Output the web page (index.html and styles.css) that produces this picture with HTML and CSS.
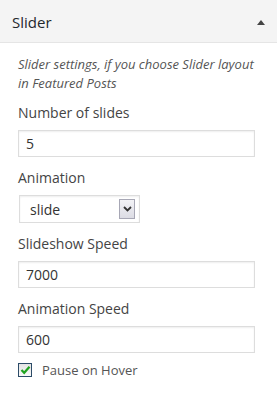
FILE: index.html
```html
<!DOCTYPE html>
<html lang="en">
<head>
    <meta charset="UTF-8">
    <meta name="viewport" content="width=device-width, initial-scale=1.0">
    <title>Slider</title>
    <link rel="stylesheet" href="styles.css">
</head>
<body>

    <div class="widget">
        <!-- Widget header -->
        <div class="widget-top">
            <h3>Slider</h3>
            <span class="toggle"></span>
        </div>

        <div class="widget-inside">
            <p class="description">Slider settings, if you choose Slider layout in Featured Posts</p>

            <label class="field-label" for="slides">Number of slides</label>
            <input type="text" id="slides" value="5">

            <label class="field-label">Animation</label>
            <div class="select">
                <span class="select-value">slide</span>
                <span class="select-btn">
                    <svg width="9" height="6" viewBox="0 0 9 6"><path d="M1 1 L4.5 4.5 L8 1" fill="none" stroke="#333" stroke-width="1.8"/></svg>
                </span>
            </div>

            <label class="field-label" for="slideshowSpeed">Slideshow Speed</label>
            <input type="text" id="slideshowSpeed" value="7000">

            <label class="field-label" for="animationSpeed">Animation Speed</label>
            <input type="text" id="animationSpeed" value="600">

            <div class="check-row">
                <span class="checkbox">
                    <svg width="11" height="10" viewBox="0 0 11 10"><path d="M1.5 5 L4.2 7.8 L9.5 1.8" fill="none" stroke="#1fa31f" stroke-width="2.2"/></svg>
                </span>
                <span class="check-label">Pause on Hover</span>
            </div>
        </div>
    </div>

</body>
</html>
```

FILE: styles.css
```css
body {
    margin: 0;
    background-color: #fff;
    font-family: "Open Sans", "Liberation Sans", sans-serif;
    color: #333;
}
.widget {
    width: 277px;
}
.widget-top {
    display: flex;
    align-items: center;
    justify-content: space-between;
    box-sizing: border-box;
    height: 43px;
    padding: 2px 12px 0 12px;
    background-color: #f4f4f4;
    border-bottom: 1px solid #e5e5e5;
}
.widget-top h3 {
    margin: 0;
    font-size: 15px;
    font-weight: 400;
    color: #23282d;
}
.toggle {
    width: 0;
    height: 0;
    margin-right: 0;
    border-left: 4px solid transparent;
    border-right: 4px solid transparent;
    border-bottom: 5px solid #444;
}
.widget-inside {
    padding: 12px 18px 0 18px;
}
.description {
    margin: 0 0 7px 0;
    font-size: 13px;
    font-style: italic;
    line-height: 19px;
    color: #555;
}
.field-label {
    display: block;
    font-size: 14px;
    line-height: 20px;
    padding-top: 3px;
    margin-bottom: 7px;
    color: #444;
}
input[type="text"] {
    display: block;
    box-sizing: border-box;
    width: 237px;
    height: 27px;
    margin: 0 0 8px 0;
    padding: 0 7px;
    border: 1px solid #ddd;
    box-shadow: inset 0 1px 2px rgba(0, 0, 0, 0.07);
    font-family: "Open Sans", "Liberation Sans", sans-serif;
    font-size: 14px;
    color: #333;
}
.select {
    display: flex;
    align-items: center;
    justify-content: space-between;
    box-sizing: border-box;
    width: 121px;
    height: 28px;
    margin: 0 0 8px 1px;
    padding: 0 4px 0 10px;
    border: 1px solid #ddd;
    box-shadow: inset 0 1px 2px rgba(0, 0, 0, 0.07);
    font-size: 14px;
    color: #333;
}
.select-btn {
    display: flex;
    align-items: center;
    justify-content: center;
    box-sizing: border-box;
    width: 16px;
    height: 20px;
    border: 1px solid #a7a7b5;
    background: linear-gradient(#f2f2f6, #dcdce4);
}
.check-row {
    display: flex;
    align-items: center;
    margin-top: 3px;
}
.checkbox {
    display: flex;
    align-items: center;
    justify-content: center;
    box-sizing: border-box;
    width: 14px;
    height: 14px;
    border: 1px solid #2c4b68;
    background: linear-gradient(#e4e4e4, #f8f8f8);
}
.check-label {
    margin-left: 10px;
    font-size: 13px;
    color: #555;
}
```
